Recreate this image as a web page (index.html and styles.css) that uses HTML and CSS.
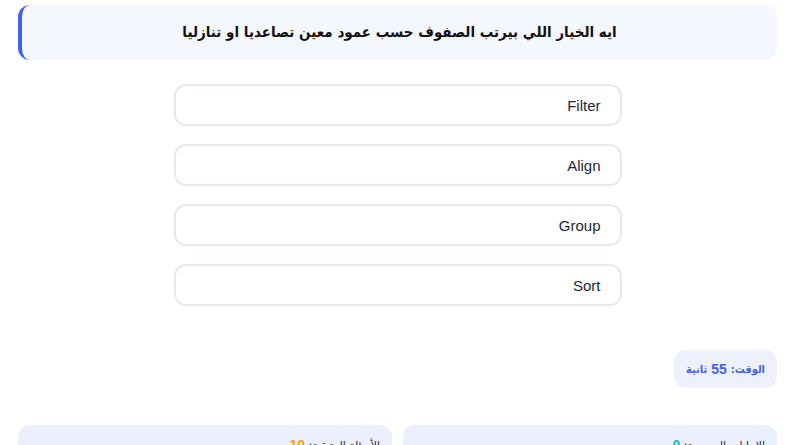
FILE: index.html
```html
<!DOCTYPE html>
<html lang="ar" dir="rtl">
<head>
<meta charset="utf-8">
<title>Quiz</title>
<link rel="stylesheet" href="styles.css">
</head>
<body>
<div class="page">
  <div class="question">ايه الخيار اللي بيرتب الصفوف حسب عمود معين تصاعديا او تنازليا</div>
  <div class="options">
    <button class="option">Filter</button>
    <button class="option">Align</button>
    <button class="option">Group</button>
    <button class="option">Sort</button>
  </div>
  <div class="timer-row">
    <div class="timer">الوقت: <span class="num">55</span> ثانية</div>
  </div>
  <div class="stats">
    <div class="stat">الإجابات الصحيحة: <span class="correct">0</span></div>
    <div class="stat">الأسئلة المتبقية: <span class="remaining">10</span></div>
  </div>
</div>
</body>
</html>
```
FILE: styles.css
```css
* { box-sizing: border-box; }
html, body { margin: 0; padding: 0; background: #ffffff; }
body {
  font-family: "Liberation Sans", "DejaVu Sans", sans-serif;
  color: #1e293b;
}
.page {
  padding: 5px 12px 0 18px;
}
.question {
  height: 55px;
  background: #f5f7ff;
  border-left: 4px solid #4361ee;
  border-radius: 12px;
  display: flex;
  align-items: center;
  justify-content: center;
  font-family: "DejaVu Sans Condensed", "DejaVu Sans", sans-serif;
  font-weight: bold;
  font-size: 15px;
  color: #111111;
  padding-bottom: 2px;
}
.options {
  margin-top: 24px;
  display: flex;
  flex-direction: column;
  align-items: center;
  gap: 18px;
}
.option {
  width: 448px;
  height: 42px;
  background: #ffffff;
  border: 2px solid #e5e9ef;
  border-radius: 12px;
  font-family: "Liberation Sans", sans-serif;
  font-size: 15px;
  color: #1e293b;
  text-align: right;
  padding: 0 19px;
  direction: rtl;
}
.timer-row {
  margin-top: 44px;
  display: flex;
  justify-content: flex-start;
}
.timer {
  height: 38px;
  padding: 0 12px;
  background: #eef0fd;
  border-radius: 12px;
  display: flex;
  align-items: center;
  font-family: "DejaVu Sans Condensed", "DejaVu Sans", sans-serif;
  font-weight: bold;
  font-size: 11px;
  color: #4361ee;
}
.timer .num {
  font-family: "Liberation Sans", sans-serif;
  font-size: 14px;
  margin: 0 4px;
}
.stats {
  margin-top: 37px;
  display: grid;
  grid-template-columns: 1fr 1fr;
  gap: 11px;
}
.stat {
  height: 60px;
  background: #eceffd;
  border-radius: 12px;
  padding: 12px 12px 0;
  font-family: "DejaVu Sans Condensed", "DejaVu Sans", sans-serif;
  font-size: 12px;
  color: #1e293b;
}
.stat span {
  font-family: "Liberation Sans", sans-serif;
  font-weight: bold;
  font-size: 14px;
}
.correct { color: #22b8cf; }
.remaining { color: #f59f00; }
```
